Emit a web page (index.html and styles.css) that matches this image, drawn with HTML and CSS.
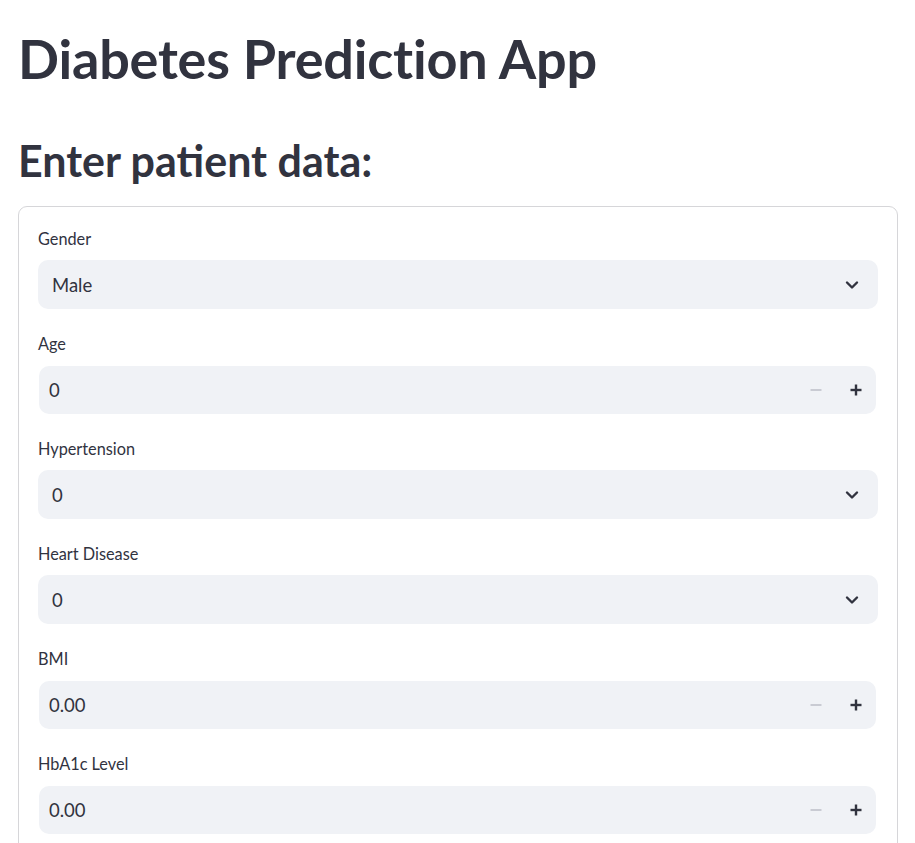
FILE: index.html
```html
<!DOCTYPE html>
<html lang="en">
<head>
<meta charset="utf-8">
<title>Diabetes Prediction App</title>
<link rel="stylesheet" href="styles.css">
</head>
<body>
<main class="main">
  <h1 class="title">Diabetes Prediction App</h1>
  <h2 class="subtitle">Enter patient data:</h2>
  <section class="card">
    <div class="field">
      <label class="label">Gender</label>
      <div class="select">
        <span class="value">Male</span>
        <svg class="chev" viewBox="0 0 16 16" width="16" height="16"><path d="M3 5.5 L8 10.5 L13 5.5" fill="none" stroke="#31333f" stroke-width="2.4" stroke-linecap="round" stroke-linejoin="round"/></svg>
      </div>
    </div>
    <div class="field">
      <label class="label">Age</label>
      <div class="number">
        <span class="value">0</span>
        <span class="step minus"><svg viewBox="0 0 12 12" width="12" height="12"><rect x="0.5" y="5" width="11" height="2" fill="#c9cbd3"/></svg></span>
        <span class="step plus"><svg viewBox="0 0 12 12" width="12" height="12"><rect x="0.5" y="4.8" width="11" height="2.4" fill="#31333f"/><rect x="4.8" y="0.5" width="2.4" height="11" fill="#31333f"/></svg></span>
      </div>
    </div>
    <div class="field">
      <label class="label">Hypertension</label>
      <div class="select">
        <span class="value">0</span>
        <svg class="chev" viewBox="0 0 16 16" width="16" height="16"><path d="M3 5.5 L8 10.5 L13 5.5" fill="none" stroke="#31333f" stroke-width="2.4" stroke-linecap="round" stroke-linejoin="round"/></svg>
      </div>
    </div>
    <div class="field">
      <label class="label">Heart Disease</label>
      <div class="select">
        <span class="value">0</span>
        <svg class="chev" viewBox="0 0 16 16" width="16" height="16"><path d="M3 5.5 L8 10.5 L13 5.5" fill="none" stroke="#31333f" stroke-width="2.4" stroke-linecap="round" stroke-linejoin="round"/></svg>
      </div>
    </div>
    <div class="field">
      <label class="label">BMI</label>
      <div class="number">
        <span class="value">0.00</span>
        <span class="step minus"><svg viewBox="0 0 12 12" width="12" height="12"><rect x="0.5" y="5" width="11" height="2" fill="#c9cbd3"/></svg></span>
        <span class="step plus"><svg viewBox="0 0 12 12" width="12" height="12"><rect x="0.5" y="4.8" width="11" height="2.4" fill="#31333f"/><rect x="4.8" y="0.5" width="2.4" height="11" fill="#31333f"/></svg></span>
      </div>
    </div>
    <div class="field">
      <label class="label">HbA1c Level</label>
      <div class="number">
        <span class="value">0.00</span>
        <span class="step minus"><svg viewBox="0 0 12 12" width="12" height="12"><rect x="0.5" y="5" width="11" height="2" fill="#c9cbd3"/></svg></span>
        <span class="step plus"><svg viewBox="0 0 12 12" width="12" height="12"><rect x="0.5" y="4.8" width="11" height="2.4" fill="#31333f"/><rect x="4.8" y="0.5" width="2.4" height="11" fill="#31333f"/></svg></span>
      </div>
    </div>
  </section>
</main>
</body>
</html>
```

FILE: styles.css
```css
html, body {
  margin: 0;
  padding: 0;
  background: #ffffff;
  overflow: hidden;
  height: 843px;
}
body {
  font-family: "Lato", "Noto Sans", sans-serif;
  color: #31333f;
}
.main {
  padding: 0 17px 0 18px;
}
.title {
  margin: 0;
  padding-top: 26px;
  font-size: 54px;
  font-weight: 700;
  line-height: 66px;
  letter-spacing: -0.2px;
}
.subtitle {
  margin: 0;
  padding-top: 44px;
  font-size: 43px;
  font-weight: 700;
  line-height: 50px;
}
.card {
  margin-top: 20px;
  border: 1px solid #d6d6d9;
  border-radius: 9px;
  padding: 21px 19px 20px 19px;
  display: flex;
  flex-direction: column;
  gap: 24px;
}
.field {
  display: flex;
  flex-direction: column;
  gap: 10px;
}
.label {
  font-size: 16.3px;
  line-height: 22px;
}
.select, .number {
  background: #f0f2f6;
  border-radius: 10px;
  height: 49px;
  display: flex;
  align-items: center;
  padding: 0 18px 0 14px;
  font-size: 18.5px;
}
.number {
  height: 48px;
  margin: 1px 2px 0 1px;
  padding: 0 0 0 10px;
}
.value {
  flex: 1;
}
.chev {
  display: block;
}
.step {
  width: 40px;
  display: flex;
  justify-content: center;
  align-items: center;
}
.step svg {
  display: block;
}
```
